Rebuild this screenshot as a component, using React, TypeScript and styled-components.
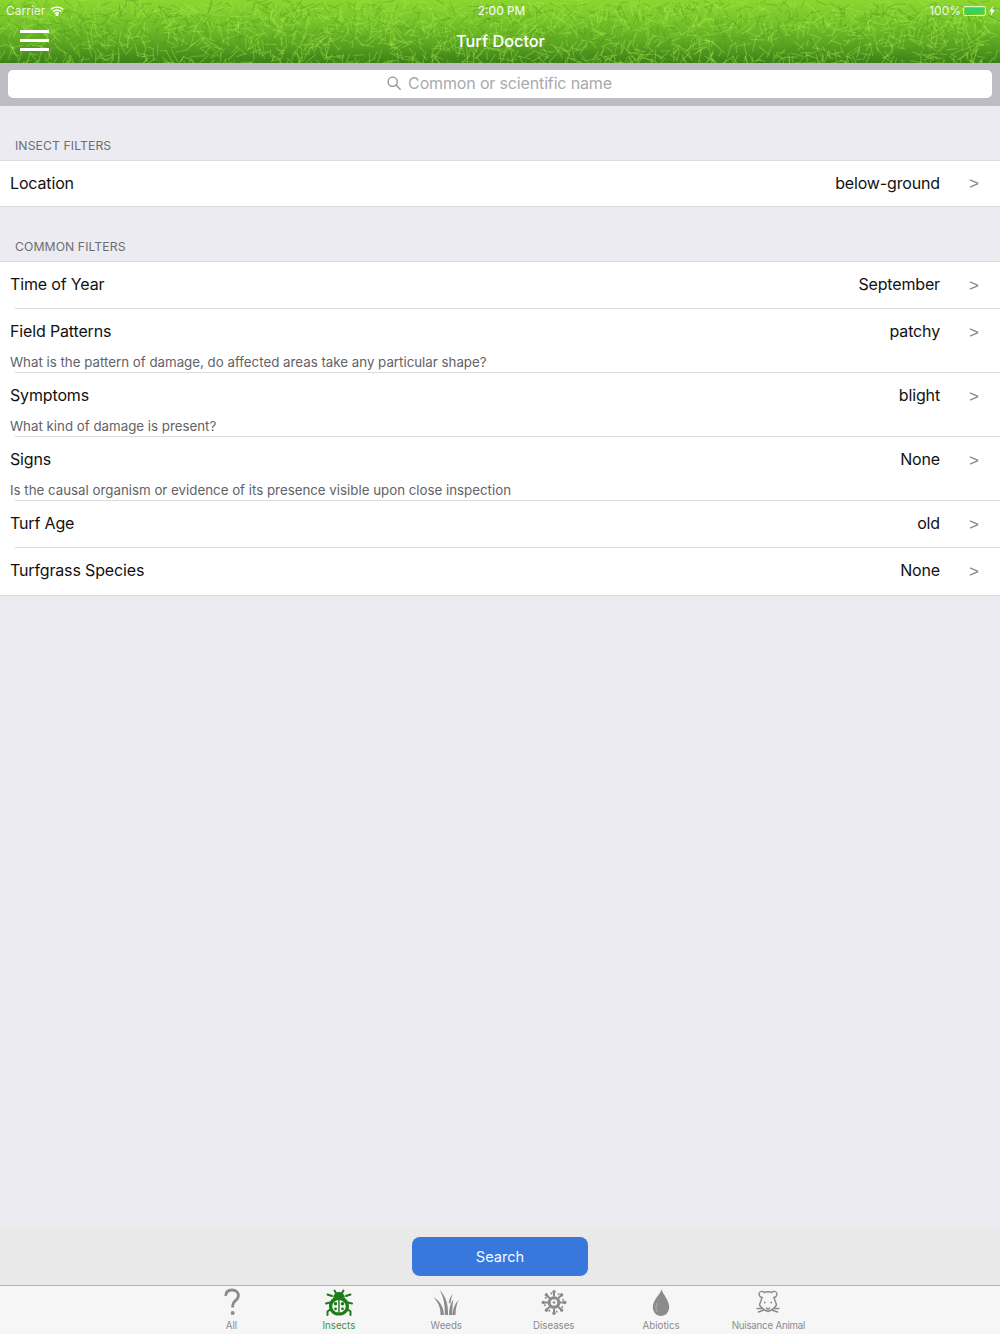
import React from "react";
import styled, { createGlobalStyle } from "styled-components";

const Global = createGlobalStyle`
  html, body { margin: 0; padding: 0; height: 100%; background: #ebebf1; }
  #root { height: 1334px; }
  * { box-sizing: border-box; }
`;
const FONT = `Inter, "Noto Sans", "Liberation Sans", sans-serif`;

const Page = styled.div`
  width: 1000px; height: 1334px; display: flex; flex-direction: column;
  font-family: ${FONT}; background: #ebebf1; overflow: hidden;
`;
const Header = styled.header`
  position: relative; height: 63px; flex: none; color: #fff; overflow: hidden;
  background: linear-gradient(180deg, #8cd630 0%, #76c42a 35%, #5ca523 70%, #3a7e18 100%);
`;
const Texture = styled.svg`
  position: absolute; inset: 0; width: 100%; height: 100%; filter: blur(.4px);
`;
const StatusBar = styled.div`
  position: relative; height: 20px; padding: 1px 5px 0 6px; display: grid; grid-template-columns: 1fr auto 1fr;
  align-items: center; font-size: 12px; color: rgba(255,255,255,.88);
`;
const StatusLeft = styled.div`display: flex; align-items: center; gap: 5px;`;
const StatusClock = styled.div`font-weight: 500; font-size: 11.8px; padding-left: 2px;`;
const StatusRight = styled.div`display: flex; align-items: center; justify-content: flex-end; gap: 3px;`;
const Battery = styled.div`
  width: 23px; height: 10px; margin-left: -1px; border: 1px solid rgba(255,255,255,.7); border-radius: 2px; padding: 1px; display: flex;
`;
const BatteryFill = styled.div`flex: 1; background: #36d45e; border-radius: 1px;`;
const NavBar = styled.div`
  position: relative; height: 43px; display: grid; grid-template-columns: 1fr auto 1fr; align-items: center; padding: 0 19px 0 20px;
`;
const Burger = styled.div`
  width: 29px; display: flex; flex-direction: column; gap: 6px; margin-top: -2px;
`;
const BurgerBar = styled.span`display: block; height: 3px; background: #fff;`;
const NavTitle = styled.div`font-size: 16.3px; font-weight: 500; margin-top: -1px;`;

const SearchBar = styled.div`
  flex: none; height: 43px; padding: 7px 8px 8px; background: #bdbcc2;
`;
const SearchField = styled.div`
  height: 28px; background: #fff; border-radius: 5px; display: flex; align-items: center; justify-content: center; gap: 7px;
  font-size: 16px; letter-spacing: -.15px; color: #a9a9ae; padding: 0 1px 2px 0;
`;
const Content = styled.main`flex: 1; display: flex; flex-direction: column; min-height: 0;`;
const SectionTitle = styled.div<{ $h: number; $pb: number }>`
  height: ${p => p.$h}px; padding: 0 0 ${p => p.$pb}px 15px; display: flex; align-items: flex-end;
  font-size: 12.2px; color: #6d6d72; letter-spacing: .1px;
`;
const Group = styled.section`
  background: #fff; border-top: 1px solid #dcdce0; border-bottom: 1px solid #dcdce0;
`;
const Row = styled.div<{ $last?: boolean }>`
  position: relative; display: flex; flex-direction: column;
  padding-bottom: ${p => (p.$last ? "0" : "1px")};
  &::after {
    content: ${p => (p.$last ? "none" : '""')};
    position: absolute; left: 15px; right: 0; bottom: 0; height: 1px; background: #dcdce0;
  }
`;
const RowMain = styled.div<{ $h: number }>`
  height: ${p => p.$h}px; display: flex; align-items: center; padding: 0 19px ${p => (p.$h > 46 ? 3 : 2)}px 10px;
  font-size: 16px; letter-spacing: -.15px; color: #111;
`;
const RowLabel = styled.div`flex: 1;`;
const RowValue = styled.div`margin-right: 27px;`;
const Chevron = styled.div`
  width: 14px; text-align: center; color: #7f7f84; font-size: 17px; line-height: 17px; padding-top: 2px; font-family: "Liberation Sans", sans-serif;
`;
const RowHint = styled.div`
  height: 17px; padding-left: 10px; font-size: 13.3px; line-height: 15px; color: #626266;
`;
const Spacer = styled.div`flex: 1;`;
const ActionBar = styled.div`
  flex: none; height: 58px; background: #e9e9e9; display: flex; justify-content: center; padding-top: 10px;
`;
const SearchButton = styled.button`
  width: 176px; height: 39px; border: none; border-radius: 8px; background: #3878dc; color: #f4f8ff;
  font-family: ${FONT}; font-size: 14.6px;
`;
const TabBar = styled.nav`
  flex: none; height: 49px; background: #f6f6f6; border-top: 1px solid #b4b4b4;
  display: grid; grid-template-columns: repeat(6, 107.4px); justify-content: center;
`;
const Tab = styled.div<{ $active?: boolean }>`
  display: flex; flex-direction: column; align-items: center; padding-top: 2px;
  color: ${p => (p.$active ? "#1b7c18" : "#8b8b8b")};
  font-size: 9.7px; line-height: 12px; white-space: nowrap;
`;
const TabLabel = styled.span<{ $active?: boolean; $tight?: boolean }>`
  color: ${p => (p.$active ? "#3f8f3c" : "#8b8b8b")};
  letter-spacing: ${p => (p.$tight ? "-.2px" : "0")};
`;
const TabIcon = styled.svg`width: 30px; height: 30px; display: block; margin-bottom: 2px;`;

function Grass() {
  const lines: React.ReactElement[] = [];
  let s = 12345;
  const r = () => { s = (s * 16807) % 2147483647; return s / 2147483647; };
  for (let i = 0; i < 2800; i++) {
    const x = r() * 1000, y = r() * 63, a = r() * Math.PI, l = 6 + r() * 9;
    lines.push(
      <line key={i} x1={x} y1={y} x2={x + Math.cos(a) * l} y2={y + Math.sin(a) * l}
        stroke={r() > 0.4 ? "#a8e84c" : "#4f9a20"} strokeOpacity={0.4} strokeWidth={1.1} />
    );
  }
  return <Texture viewBox="0 0 1000 63" preserveAspectRatio="none">{lines}</Texture>;
}

const Wifi = () => (
  <svg width="14" height="10" viewBox="0 0 14 10" fill="none" stroke="#fff" strokeWidth="1.4">
    <path d="M1 3.4C4.5.4 9.5.4 13 3.4" /><path d="M3 5.6c2.4-2 5.6-2 8 0" /><path d="M5 7.600c1.200-1 2.800-1 4 0" />
    <circle cx="7" cy="9" r=".7" fill="#fff" />
  </svg>
);
const Bolt = () => (
  <svg width="6" height="10" viewBox="0 0 6 10"><path d="M3.800 0 .3 5.600h2L1.600 10 5.700 4H3.500z" fill="#fff" /></svg>
);
const Magnifier = () => (
  <svg width="14" height="14" viewBox="0 0 14 14" fill="none" stroke="#8e8e93" strokeWidth="1.300">
    <circle cx="5.700" cy="5.700" r="4.600" /><path d="m9 9 4.200 4.200" strokeLinecap="round" />
  </svg>
);

const QuestionIcon = () => (
  <TabIcon viewBox="0 0 30 30">
    <path d="M8.600 7.800C8.900 4 11.600 2 15 2c3.700 0 6.400 2.300 6.400 5.500 0 2.700-1.500 4-3.200 5.400-1.700 1.400-2.500 2.500-2.500 4.500v2"
      fill="none" stroke="currentColor" strokeWidth="2.800" />
    <circle cx="15.600" cy="25" r="2" fill="currentColor" />
  </TabIcon>
);
const BugIcon = () => (
  <TabIcon viewBox="0 0 30 30">
    <g stroke="currentColor" strokeWidth="2" fill="none" strokeLinecap="round">
      <path d="M10.500 2.500l2 3.500M19.500 2.500 17.500 6" />
      <path d="M8 8 3.500 6.500M22 8l4.500-1.500" />
      <path d="M6 14.500 2 15.500M24 14.500l4 1" />
      <path d="M7 21l-3.500 2.500V27M23 21l3.500 2.500V27" />
    </g>
    <path d="M9 9.500C10 5.500 12.500 4 15 4s5 1.500 6 5.500z" fill="currentColor" />
    <path fill="currentColor" fillRule="evenodd"
      d="M15 8.500c6 0 10 4 10 9.700C25 24 20.500 27.500 15 27.500S5 24 5 18.200C5 12.500 9 8.500 15 8.500zM14.300 12c-2.800.6-6 2.500-6 6.200 0 3.500 2.500 5.900 6 6.300zM15.700 12v12.500c3.500-.4 6-2.800 6-6.300 0-3.700-3.200-5.600-6-6.200z" />
    <circle cx="11.500" cy="15.800" r="1.700" fill="currentColor" /><circle cx="18.500" cy="15.800" r="1.700" fill="currentColor" />
    <circle cx="11.500" cy="20.800" r="1.400" fill="currentColor" /><circle cx="18.500" cy="20.800" r="1.400" fill="currentColor" />
  </TabIcon>
);
const WeedIcon = () => (
  <TabIcon viewBox="0 0 30 30">
    <g fill="currentColor">
      <path d="M9.500 27C9.500 20 8 15 2.500 9.500 8 12 12.500 18 13 27z" />
      <path d="M13.800 27C14 18 13 9 8.500 2 14.500 7.500 17.500 16 17 27z" />
      <path d="M18 27c0-6 1-11 4.500-16-1 5-1 8-1.200 16z" />
      <path d="M21.500 27c.3-6 2-11 6-15-2 4.500-3 9-3 15z" />
      <path d="M17.800 15c.3-3.500 1.500-6.500 3.700-9-1 3-1.500 6-2 9.500z" />
    </g>
  </TabIcon>
);
const VirusIcon = () => {
  const spokes = [0, 45, 90, 135, 180, 225, 270, 315];
  return (
    <TabIcon viewBox="0 0 30 30">
      <g transform="translate(15 14.500)" fill="currentColor" stroke="currentColor">
        {spokes.map(a => (
          <g key={a} transform={`rotate(${a})`}>
            <line x1="0" y1="-6" x2="0" y2="-10" strokeWidth="2" />
            <circle cx="0" cy="-10.800" r="1.700" stroke="none" />
            <circle cx="4.600" cy="-8.300" r="1" stroke="none" />
          </g>
        ))}
        <circle r="4.800" fill="none" strokeWidth="3" />
        <circle r="1.300" stroke="none" />
      </g>
    </TabIcon>
  );
};
const DropIcon = () => (
  <TabIcon viewBox="0 0 30 30">
    <path d="M15.500 1.500c1 4 7.700 10.500 7.700 17.500 0 5-3.500 9-8.200 9s-8.200-4-8.200-9c0-7 7.700-13 8.700-17.500z" fill="currentColor" />
    <path d="M11 15c-1.500 3-1.500 6.500.5 9" fill="none" stroke="#b3b3b3" strokeWidth="1" />
  </TabIcon>
);
const RatIcon = () => (
  <TabIcon viewBox="0 0 30 30">
    <g fill="none" stroke="currentColor" strokeWidth="1.400" strokeLinejoin="round" strokeLinecap="round">
      <path d="M9 9.500C6.800 9 5.500 7 6.300 5c.8-1.800 3.400-2.200 5-.6" />
      <path d="M21 9.500c2.200-.5 3.500-2.500 2.700-4.500-.8-1.800-3.400-2.200-5-.6" />
      <path d="M11.300 4.400c2.400-.9 5-.9 7.400 0" />
      <path d="M9 9.500C8.500 12 7 14.500 6.500 17c2 3 5 5.500 8.500 6.500 3.500-1 6.500-3.500 8.500-6.500-.5-2.500-2-5-2.500-7.500" />
      <path d="M4 20.500h5M26 20.500h-5M5.500 24l5.500-2M24.500 24 19 22" />
      <path d="M13.500 20 15 21.500l1.500-1.500" />
    </g>
    <circle cx="11.700" cy="14.500" r=".9" fill="currentColor" /><circle cx="18.300" cy="14.500" r=".9" fill="currentColor" />
  </TabIcon>
);

type Item = { label: string; value: string; hint?: string };
const insect: Item[] = [{ label: "Location", value: "below-ground" }];
const common: Item[] = [
  { label: "Time of Year", value: "September" },
  { label: "Field Patterns", value: "patchy", hint: "What is the pattern of damage, do affected areas take any particular shape?" },
  { label: "Symptoms", value: "blight", hint: "What kind of damage is present?" },
  { label: "Signs", value: "None", hint: "Is the causal organism or evidence of its presence visible upon close inspection" },
  { label: "Turf Age", value: "old" },
  { label: "Turfgrass Species", value: "None" },
];
const FilterGroup = ({ items, lastHeight }: { items: Item[]; lastHeight: number }) => (
  <Group>
    {items.map((it, i) => {
      const last = i === items.length - 1;
      return (
        <Row key={it.label} $last={last}>
          <RowMain $h={last ? lastHeight : 46}>
            <RowLabel>{it.label}</RowLabel>
            <RowValue>{it.value}</RowValue>
            <Chevron>&gt;</Chevron>
          </RowMain>
          {it.hint && <RowHint>{it.hint}</RowHint>}
        </Row>
      );
    })}
  </Group>
);

export default function App() {
  return (
    <Page>
      <Global />
      <Header>
        <Grass />
        <StatusBar>
          <StatusLeft>Carrier <Wifi /></StatusLeft>
          <StatusClock>2:00 PM</StatusClock>
          <StatusRight>100% <Battery><BatteryFill /></Battery><Bolt /></StatusRight>
        </StatusBar>
        <NavBar>
          <Burger><BurgerBar /><BurgerBar /><BurgerBar /></Burger>
          <NavTitle>Turf Doctor</NavTitle>
        </NavBar>
      </Header>
      <SearchBar>
        <SearchField><Magnifier />Common or scientific name</SearchField>
      </SearchBar>
      <Content>
        <SectionTitle $h={54} $pb={7}>INSECT FILTERS</SectionTitle>
        <FilterGroup items={insect} lastHeight={45} />
        <SectionTitle $h={54} $pb={7}>COMMON FILTERS</SectionTitle>
        <FilterGroup items={common} lastHeight={47} />
        <Spacer />
      </Content>
      <ActionBar><SearchButton>Search</SearchButton></ActionBar>
      <TabBar>
        <Tab><QuestionIcon /><TabLabel>All</TabLabel></Tab>
        <Tab $active><BugIcon /><TabLabel $active>Insects</TabLabel></Tab>
        <Tab><WeedIcon /><TabLabel>Weeds</TabLabel></Tab>
        <Tab><VirusIcon /><TabLabel>Diseases</TabLabel></Tab>
        <Tab><DropIcon /><TabLabel>Abiotics</TabLabel></Tab>
        <Tab><RatIcon /><TabLabel $tight>Nuisance Animal</TabLabel></Tab>
      </TabBar>
    </Page>
  );
}
